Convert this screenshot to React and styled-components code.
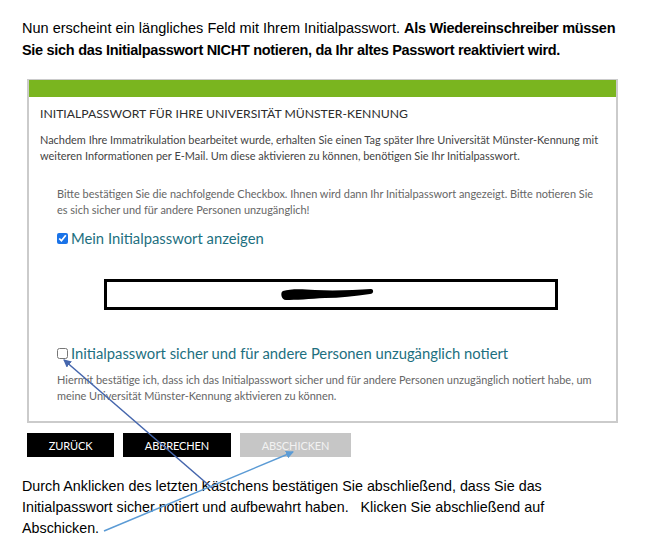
import React from "react";
import styled, { createGlobalStyle } from "styled-components";

const Global = createGlobalStyle`
  html, body { margin: 0; padding: 0; background: #fff; }
  body { width: 648px; height: 543px; overflow: hidden; }
`;

const Page = styled.div`
  position: relative;
  width: 648px;
  height: 543px;
  padding: 17px 0 0 22px;
  box-sizing: border-box;
  font-family: "Liberation Sans", Arial, sans-serif;
  color: #000;
`;

const Doc = styled.p`
  margin: ${(p) => p.$mt || 0}px 0 0 0;
  font-size: ${(p) => p.$fs || 14.5}px;
  line-height: ${(p) => p.$lh || 22}px;
  width: 620px;
  white-space: nowrap;
  b { font-weight: 700; letter-spacing: -0.3px; }
`;

const Card = styled.div`
  margin: 18px 0 0 5px;
  width: 591px;
  height: 344px;
  box-sizing: border-box;
  border: 2px solid #cbcbcb;
  border-top-width: 1px;
  font-family: Lato, "Noto Sans", sans-serif;
  display: flex;
  flex-direction: column;
`;

const GreenBar = styled.div`
  height: 17px;
  background: #7ab51f;
  flex: none;
`;

const CardBody = styled.div`
  padding: 8px 10px 0 11px;
  display: flex;
  flex-direction: column;
`;

const Title = styled.h2`
  margin: 0;
  font-size: 12.2px;
  line-height: 17px;
  font-weight: 400;
  color: #2d2d2d;
`;

const Info = styled.p`
  margin: ${(p) => p.$mt || 0}px 0 0 ${(p) => p.$indent || 0}px;
  font-size: 10.95px;
  line-height: 16px;
  color: ${(p) => p.$color || "#444"};
`;

const CheckRow = styled.label`
  margin: ${(p) => p.$mt || 0}px 0 0 17px;
  display: flex;
  align-items: center;
  font-size: 14.8px;
  line-height: 20px;
  color: #1d6f80;
`;

const Box = styled.input`
  width: 11px;
  height: 11px;
  margin: 1px 3px 0 0;
  accent-color: #1a73e8;
`;

const PwField = styled.div`
  margin: 31px 0 0 64px;
  width: 454px;
  height: 31px;
  box-sizing: border-box;
  border: 3px solid #000;
  position: relative;
`;

const Scribble = styled.svg`
  position: absolute;
  left: 173px;
  top: 5px;
`;

const Buttons = styled.div`
  margin: 10px 0 0 5px;
  display: flex;
  gap: 9px;
`;

const Btn = styled.div`
  width: ${(p) => p.$w}px;
  height: 24px;
  background: ${(p) => (p.$disabled ? "#c6c6c6" : "#000")};
  color: ${(p) => (p.$disabled ? "#f2f2f2" : "#fff")};
  font-family: Lato, "Noto Sans", sans-serif;
  font-size: 11px;
  display: flex;
  align-items: center;
  justify-content: center;
  letter-spacing: -0.1px;
`;

const Overlay = styled.svg`
  position: absolute;
  left: 0;
  top: 0;
  pointer-events: none;
`;

export default function App() {
  return (
    <>
      <Global />
      <Page>
        <Doc>
          Nun erscheint ein längliches Feld mit Ihrem Initialpasswort.{" "}
          <b>
            Als Wiedereinschreiber müssen
            <br />
            Sie sich das Initialpasswort NICHT notieren, da Ihr altes Passwort
            reaktiviert wird.
          </b>
        </Doc>
        <Card>
          <GreenBar />
          <CardBody>
            <Title>INITIALPASSWORT FÜR IHRE UNIVERSITÄT MÜNSTER-KENNUNG</Title>
            <Info $mt={10}>
              Nachdem Ihre Immatrikulation bearbeitet wurde, erhalten Sie einen
              Tag später Ihre Universität Münster-Kennung mit weiteren
              Informationen per E-Mail. Um diese aktivieren zu können, benötigen
              Sie Ihr Initialpasswort.
            </Info>
            <Info $mt={22} $indent={17} $color="#666">
              Bitte bestätigen Sie die nachfolgende Checkbox. Ihnen wird dann
              Ihr Initialpasswort angezeigt. Bitte notieren Sie es sich sicher
              und für andere Personen unzugänglich!
            </Info>
            <CheckRow $mt={10}>
              <Box type="checkbox" defaultChecked />
              Mein Initialpasswort anzeigen
            </CheckRow>
            <PwField>
              <Scribble width="100" height="15" viewBox="0 0 100 15">
                <path
                  d="M3 4 C10 2 20 2 35 3 C55 4 75 3 91 2 C94 2 94 7 90 7 C75 9 60 11 45 11 C30 12 15 13 6 13 C1 13 0 5 3 4 Z"
                  fill="#000"
                />
              </Scribble>
            </PwField>
            <CheckRow $mt={33}>
              <Box type="checkbox" />
              Initialpasswort sicher und für andere Personen unzugänglich notiert
            </CheckRow>
            <Info $mt={9} $indent={17} $color="#666">
              Hiermit bestätige ich, dass ich das Initialpasswort sicher und für
              andere Personen unzugänglich notiert habe, um meine Universität
              Münster-Kennung aktivieren zu können.
            </Info>
          </CardBody>
        </Card>
        <Buttons>
          <Btn $w={87}>ZURÜCK</Btn>
          <Btn $w={108}>ABBRECHEN</Btn>
          <Btn $w={111} $disabled>
            ABSCHICKEN
          </Btn>
        </Buttons>
        <Doc $lh={21} $mt={19} $fs={14.3}>
          Durch Anklicken des letzten Kästchens bestätigen Sie abschließend,
          dass Sie das
          <br />
          Initialpasswort sicher notiert und aufbewahrt haben.&nbsp;&nbsp;
          Klicken Sie abschließend auf
          <br />
          Abschicken.
        </Doc>
        <Overlay width="648" height="543" viewBox="0 0 648 543">
          <defs>
            <marker id="h1" markerWidth="8" markerHeight="8" refX="7" refY="4" orient="auto" markerUnits="userSpaceOnUse">
              <path d="M0 0 L8 4 L0 8 Z" fill="#4566ad" />
            </marker>
            <marker id="h2" markerWidth="8" markerHeight="8" refX="7" refY="4" orient="auto" markerUnits="userSpaceOnUse">
              <path d="M0 0 L8 4 L0 8 Z" fill="#5b9bd5" />
            </marker>
          </defs>
          <line x1="212" y1="488" x2="64" y2="360" stroke="#4566ad" strokeWidth="1.5" markerEnd="url(#h1)" />
          <line x1="104" y1="531" x2="293" y2="452" stroke="#5b9bd5" strokeWidth="1.5" markerEnd="url(#h2)" />
        </Overlay>
      </Page>
    </>
  );
}
